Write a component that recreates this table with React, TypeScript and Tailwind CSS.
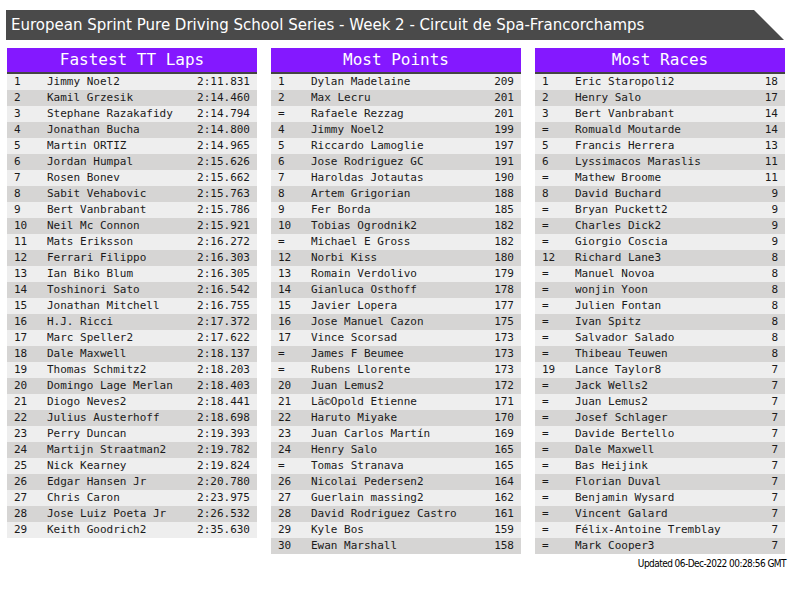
import React from "react";

type Row = [string, string, string];

const laps: Row[] = [
  ["1", "Jimmy Noel2", "2:11.831"],
  ["2", "Kamil Grzesik", "2:14.460"],
  ["3", "Stephane Razakafidy", "2:14.794"],
  ["4", "Jonathan Bucha", "2:14.800"],
  ["5", "Martin ORTIZ", "2:14.965"],
  ["6", "Jordan Humpal", "2:15.626"],
  ["7", "Rosen Bonev", "2:15.662"],
  ["8", "Sabit Vehabovic", "2:15.763"],
  ["9", "Bert Vanbrabant", "2:15.786"],
  ["10", "Neil Mc Connon", "2:15.921"],
  ["11", "Mats Eriksson", "2:16.272"],
  ["12", "Ferrari Filippo", "2:16.303"],
  ["13", "Ian Biko Blum", "2:16.305"],
  ["14", "Toshinori Sato", "2:16.542"],
  ["15", "Jonathan Mitchell", "2:16.755"],
  ["16", "H.J. Ricci", "2:17.372"],
  ["17", "Marc Speller2", "2:17.622"],
  ["18", "Dale Maxwell", "2:18.137"],
  ["19", "Thomas Schmitz2", "2:18.203"],
  ["20", "Domingo Lage Merlan", "2:18.403"],
  ["21", "Diogo Neves2", "2:18.441"],
  ["22", "Julius Austerhoff", "2:18.698"],
  ["23", "Perry Duncan", "2:19.393"],
  ["24", "Martijn Straatman2", "2:19.782"],
  ["25", "Nick Kearney", "2:19.824"],
  ["26", "Edgar Hansen Jr", "2:20.780"],
  ["27", "Chris Caron", "2:23.975"],
  ["28", "Jose Luiz Poeta Jr", "2:26.532"],
  ["29", "Keith Goodrich2", "2:35.630"],
];

const points: Row[] = [
  ["1", "Dylan Madelaine", "209"],
  ["2", "Max Lecru", "201"],
  ["=", "Rafaele Rezzag", "201"],
  ["4", "Jimmy Noel2", "199"],
  ["5", "Riccardo Lamoglie", "197"],
  ["6", "Jose Rodriguez GC", "191"],
  ["7", "Haroldas Jotautas", "190"],
  ["8", "Artem Grigorian", "188"],
  ["9", "Fer Borda", "185"],
  ["10", "Tobias Ogrodnik2", "182"],
  ["=", "Michael E Gross", "182"],
  ["12", "Norbi Kiss", "180"],
  ["13", "Romain Verdolivo", "179"],
  ["14", "Gianluca Osthoff", "178"],
  ["15", "Javier Lopera", "177"],
  ["16", "Jose Manuel Cazon", "175"],
  ["17", "Vince Scorsad", "173"],
  ["=", "James F Beumee", "173"],
  ["=", "Rubens Llorente", "173"],
  ["20", "Juan Lemus2", "172"],
  ["21", "Lã©Opold Etienne", "171"],
  ["22", "Haruto Miyake", "170"],
  ["23", "Juan Carlos Martín", "169"],
  ["24", "Henry Salo", "165"],
  ["=", "Tomas Stranava", "165"],
  ["26", "Nicolai Pedersen2", "164"],
  ["27", "Guerlain massing2", "162"],
  ["28", "David Rodriguez Castro", "161"],
  ["29", "Kyle Bos", "159"],
  ["30", "Ewan Marshall", "158"],
];

const races: Row[] = [
  ["1", "Eric Staropoli2", "18"],
  ["2", "Henry Salo", "17"],
  ["3", "Bert Vanbrabant", "14"],
  ["=", "Romuald Moutarde", "14"],
  ["5", "Francis Herrera", "13"],
  ["6", "Lyssimacos Maraslis", "11"],
  ["=", "Mathew Broome", "11"],
  ["8", "David Buchard", "9"],
  ["=", "Bryan Puckett2", "9"],
  ["=", "Charles Dick2", "9"],
  ["=", "Giorgio Coscia", "9"],
  ["12", "Richard Lane3", "8"],
  ["=", "Manuel Novoa", "8"],
  ["=", "wonjin Yoon", "8"],
  ["=", "Julien Fontan", "8"],
  ["=", "Ivan Spitz", "8"],
  ["=", "Salvador Salado", "8"],
  ["=", "Thibeau Teuwen", "8"],
  ["19", "Lance Taylor8", "7"],
  ["=", "Jack Wells2", "7"],
  ["=", "Juan Lemus2", "7"],
  ["=", "Josef Schlager", "7"],
  ["=", "Davide Bertello", "7"],
  ["=", "Dale Maxwell", "7"],
  ["=", "Bas Heijink", "7"],
  ["=", "Florian Duval", "7"],
  ["=", "Benjamin Wysard", "7"],
  ["=", "Vincent Galard", "7"],
  ["=", "Félix-Antoine Tremblay", "7"],
  ["=", "Mark Cooper3", "7"],
];

function Table({ title, rows }: { title: string; rows: Row[] }) {
  return (
    <div className="w-[250px] flex flex-col">
      <div className="h-[24px] bg-[#8418ff] text-white text-[16px] leading-[24px] text-center font-['DejaVu_Sans_Mono',monospace] border-b-2 border-[#444444] box-content">
        {title}
      </div>
      {rows.map((r, i) => (
        <div
          key={i}
          className={`flex h-[16px] items-center text-[11px] leading-[16px] text-[#1a1a1a] font-['DejaVu_Sans_Mono',monospace] px-[7px] ${
            i % 2 === 0 ? "bg-[#eeeeee]" : "bg-[#d6d5d4]"
          }`}
        >
          <span className="w-[33px] shrink-0">{r[0]}</span>
          <span className="flex-1 whitespace-nowrap overflow-hidden">{r[1]}</span>
          <span className="shrink-0 text-right">{r[2]}</span>
        </div>
      ))}
    </div>
  );
}

export default function App() {
  return (
    <div className="w-[800px] h-[600px] bg-white pt-[10px] relative">
      <div className="ml-[6px] w-[778px] h-[30px] bg-[#4a4a4a] [clip-path:polygon(0_0,calc(100%-30px)_0,100%_100%,0_100%)] flex items-center pl-[5px] text-white text-[15px] font-['DejaVu_Sans',sans-serif]">
        European Sprint Pure Driving School Series - Week 2 - Circuit de Spa-Francorchamps
      </div>
      <div className="flex gap-[14px] ml-[7px] mt-[8px] items-start">
        <Table title="Fastest TT Laps" rows={laps} />
        <Table title="Most Points" rows={points} />
        <Table title="Most Races" rows={races} />
      </div>
      <div className="w-[786px] text-right mt-[3px] text-[10px] leading-[14px] text-black font-['DejaVu_Sans_Condensed','DejaVu_Sans',sans-serif] tracking-[-0.55px]">
        Updated 06-Dec-2022 00:28:56 GMT
      </div>
    </div>
  );
}
